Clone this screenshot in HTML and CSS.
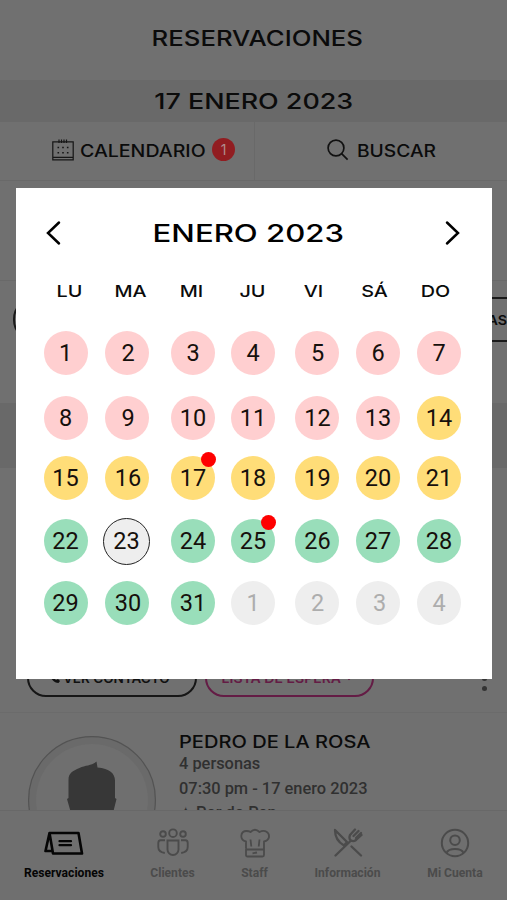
FILE: index.html
```html
<!DOCTYPE html>
<html lang="es">
<head>
  <meta charset="UTF-8">
  <meta name="viewport" content="width=device-width, initial-scale=1.0">
  <title>Reservaciones</title>
  <link rel="stylesheet" href="styles.css">
</head>
<body>
  <div class="app">
    <header class="header"><h1 class="wide title">RESERVACIONES</h1></header>
    <div class="date-bar"><span class="wide date">17 ENERO 2023</span></div>
    <div class="tabs">
      <div class="tab tab-calendar">
        <svg width="22" height="22" viewBox="0 0 22 22" fill="none" stroke="#161616" stroke-width="1.2">
          <path d="M.8 2.8h20.4v18H.8zM.8 18.300h20.400M7 .5v3.500M9.500 .5v3.500M12 .5v3.500M14.500 .5v3.500"/>
          <path stroke-width="1.600" d="M5.500 8.500h1.600M10.200 8.500h1.600M14.900 8.500h1.600M5.500 13.700h1.600M10.200 13.700h1.600M14.900 13.700h1.600"/>
        </svg>
        <span class="tab-label label-calendar"><span class="wide">CALENDARIO</span></span>
        <span class="count">1</span>
      </div>
      <div class="tab tab-search">
        <svg width="22" height="22" viewBox="0 0 22 22" fill="none" stroke="#111" stroke-width="1.700">
          <circle cx="9" cy="9" r="7.900"/><path d="M14.600 14.600l6 6"/>
        </svg>
        <span class="tab-label label-search"><span class="wide">BUSCAR</span></span>
      </div>
    </div>
    <div class="summary"></div>
    <div class="filters">
      <span class="pill"></span>
      <span class="pill pill-last"><span class="wide">MESAS</span></span>
    </div>
    <div class="section-band"></div>
    <article class="card card-first">
      <div class="actions">
        <button class="btn btn-contact">
          <svg width="10" height="10" viewBox="0 0 10 10"><path fill="#111" d="M2 0l2 2-1 2 3 3 2-1 2 2-1.500 2C4 10 0 5 0 1.500z"/></svg>
          <span class="wide">VER CONTACTO</span>
        </button>
        <button class="btn btn-wait"><span class="wide">LISTA DE ESPERA</span>
          <svg width="8" height="6" viewBox="0 0 8 6" fill="none" stroke="#641c45" stroke-width="1.800"><path d="M1 1l3 3 3-3"/></svg>
        </button>
      </div>
      <div class="dots"><i></i><i></i><i></i></div>
    </article>
    <article class="card person">
      <svg class="avatar" width="128" height="128" viewBox="0 0 128 128">
        <circle cx="64" cy="64" r="63.400" fill="#6a6a6a" stroke="#535353" stroke-width="1.200"/>
        <circle cx="64" cy="64" r="56" fill="#6f6f6f"/>
        <path fill="#373737" d="M40.500 62V44c0-7 4-9 11-12 6-3 12-2 17-6.500l1 6c12 1 17.500 6 17.500 13V62l1.500 1-3.500 14c-3 15-11 24-20.500 24S46 92 43 77l-4-14z"/>
      </svg>
      <div class="details">
        <h2><span class="wide">PEDRO DE LA ROSA</span></h2>
        <p>4 personas</p>
        <p class="time">07:30 pm - 17 enero 2023</p>
        <p class="place">✦ Por do Pan</p>
      </div>
    </article>
    <nav class="nav">
      <a class="active">
        <svg width="40" height="30" viewBox="0 0 40 30" fill="none" stroke="#050505" stroke-width="2.200" stroke-linejoin="round" stroke-linecap="round">
          <path d="M5.500 5h29l3.500 20.500H9zM5.500 5L1.500 23H8" stroke-width="2.600"/><path d="M15.500 13.200h11.500M15.500 17.200h11.500"/>
        </svg>
        <span>Reservaciones</span>
      </a>
      <a>
        <svg width="32" height="30" viewBox="0 0 32 30" fill="none" stroke="#4b4b4b" stroke-width="1.900">
          <circle cx="16" cy="5.200" r="3.800"/><circle cx="6" cy="6" r="2.800"/><circle cx="26" cy="6" r="2.800"/>
          <path d="M10.500 12.500h11v9a5.500 5.500 0 0 1-11 0zM8 12.300H3.500Q1.300 12.300 1.300 15v4q0 5 6.500 6M24 12.300h4.500q2.200 0 2.200 2.700v4q0 5-6.500 6"/>
        </svg>
        <span>Clientes</span>
      </a>
      <a>
        <svg width="30" height="30" viewBox="0 0 30 30" fill="none" stroke="#4b4b4b" stroke-width="1.800" stroke-linejoin="round">
          <path d="M6 20.500v-7C-.8 12 .2 3 6.500 3q2.500 0 4 1 4.500-4.500 9 0c5.500-3 10 .5 9.500 5q-.5 3.500-5 4.500v13.500q0 1.500-1.500 1.500h-15Q6 28.500 6 27v-5.500h18M10.500 11.500l.8 7M19.500 11.500l-.8 7M12.500 25.300l4.500-.8"/>
        </svg>
        <span>Staff</span>
      </a>
      <a>
        <svg width="30" height="30" viewBox="0 0 30 30" fill="none" stroke="#4b4b4b" stroke-width="2.300" stroke-linecap="round" stroke-linejoin="round">
          <path d="M2.500 27.500L17 13.500M2 2l12 12-3 3.500C5 14 2 9 2 2zM18.500 18.500l9.500 9M22 1.500l-5 5.500q-1.500 4 1 5.500t5-.5L28.500 7M25.500 3l-5 5M28 5l-5 5"/>
        </svg>
        <span>Información</span>
      </a>
      <a>
        <svg width="30" height="30" viewBox="0 0 30 30" fill="none" stroke="#4b4b4b" stroke-width="2">
          <circle cx="15" cy="15" r="13.200"/><circle cx="15" cy="12.200" r="4.800"/><path d="M6.500 25q1.500-4 8.500-4t8.500 4"/>
        </svg>
        <span>Mi Cuenta</span>
      </a>
    </nav>
  </div>

  <div class="modal">
    <div class="modal-head">
      <svg width="16" height="26" viewBox="0 0 16 26" fill="none" stroke="#000" stroke-width="2.500" stroke-linecap="round"><path d="M14 2.500L3 13l11 10.500"/></svg>
      <h2 class="wide month">ENERO 2023</h2>
      <svg width="16" height="26" viewBox="0 0 16 26" fill="none" stroke="#000" stroke-width="2.500" stroke-linecap="round"><path d="M2 2.500L13 13 2 23.500"/></svg>
    </div>
    <div class="weekdays">
      <span class="wide">LU</span><span class="wide">MA</span><span class="wide">MI</span><span class="wide">JU</span><span class="wide">VI</span><span class="wide">SÁ</span><span class="wide">DO</span>
    </div>
    <div class="days">
      <span class="day full">1</span><span class="day full">2</span><span class="day full">3</span><span class="day full">4</span><span class="day full">5</span><span class="day full">6</span><span class="day full">7</span>
      <span class="day full">8</span><span class="day full">9</span><span class="day full">10</span><span class="day full">11</span><span class="day full">12</span><span class="day full">13</span><span class="day few">14</span>
      <span class="day few">15</span><span class="day few">16</span><span class="day few alert">17</span><span class="day few">18</span><span class="day few">19</span><span class="day few">20</span><span class="day few">21</span>
      <span class="day free">22</span><span class="day today">23</span><span class="day free">24</span><span class="day free alert">25</span><span class="day free">26</span><span class="day free">27</span><span class="day free">28</span>
      <span class="day free">29</span><span class="day free">30</span><span class="day free">31</span><span class="day other">1</span><span class="day other">2</span><span class="day other">3</span><span class="day other">4</span>
    </div>
  </div>
</body>
</html>
```
FILE: styles.css
```css
* {
  box-sizing: border-box;
}
body {
  margin: 0;
  font-family: Roboto, Arial, sans-serif;
  background: #707070;
  color: #0b0b0b;
}
h1, h2, p {
  margin: 0;
}
.app {
  height: 900px;
  display: flex;
  flex-direction: column;
  overflow: hidden;
}
/* extended display lettering */
.wide {
  display: inline-block;
  font-family: Inter, "Liberation Sans", sans-serif;
  font-weight: 500;
  white-space: nowrap;
  transform: scaleX(1.2);
}
.header {
  height: 80px;
  flex: none;
  display: flex;
  justify-content: center;
  padding: 26px 0 0 8px;
}
.title {
  font-size: 21px;
  line-height: 26px;
  height: 26px;
  transform: scaleX(1.225);
}
.date-bar {
  height: 42px;
  flex: none;
  background: #696969;
  display: flex;
  align-items: center;
  justify-content: center;
}
.date {
  font-size: 21px;
  transform: scaleX(1.28);
}
.tabs {
  height: 59px;
  flex: none;
  display: flex;
  border-bottom: 1px solid #696969;
}
.tab {
  display: flex;
  align-items: flex-start;
  padding-top: 17px;
}
.tab-calendar {
  width: 255px;
  padding-left: 52px;
  border-right: 1px solid #696969;
}
.tab-search {
  padding-left: 72px;
}
.tab-label {
  font-size: 17px;
  line-height: 25px;
}
.tab-label .wide, h2 .wide {
  transform-origin: left;
}
.tab-label .wide {
  transform: scaleX(1.15);
}
.label-search .wide {
  transform: scaleX(1.13);
}
.label-calendar {
  width: 132px;
  margin-left: 6px;
}
.label-search {
  margin-left: 8px;
}
.count {
  width: 23px;
  height: 23px;
  margin-top: -1px;
  border-radius: 50%;
  background: #911d21;
  color: #b08c8d;
  font: 14px/23px Inter, sans-serif;
  text-align: center;
}
.summary {
  height: 100px;
  flex: none;
  border-bottom: 1px solid #696969;
}
.filters {
  height: 122px;
  flex: none;
  display: flex;
  justify-content: space-between;
  padding: 16px 0 0 13px;
}
.pill {
  width: 120px;
  height: 45px;
  border: 2px solid #1a1a1a;
  border-radius: 22px;
}
.pill-last {
  border-right: 0;
  border-radius: 22px 0 0 22px;
  font-size: 13px;
  line-height: 42px;
  text-align: right;
}
.pill-last .wide {
  font-weight: 600;
  transform-origin: right;
  transform: scaleX(1.1);
}
.section-band {
  height: 65px;
  flex: none;
  background: #696969;
}
.card {
  flex: none;
}
.card-first {
  height: 245px;
  display: flex;
  align-items: flex-end;
  justify-content: space-between;
  padding: 0 20px 15px 27px;
  border-bottom: 1px solid #6b6b6b;
}
.actions {
  display: flex;
  gap: 8px;
}
.btn {
  width: 170px;
  height: 38px;
  padding: 0 7px 0 0;
  border: 2px solid #161616;
  border-radius: 19px;
  background: none;
  color: #111;
  font-size: 13px;
  display: flex;
  align-items: center;
  justify-content: center;
  gap: 5px;
}
.btn .wide {
  font-weight: 600;
  transform: scaleX(1.04);
}
.btn-wait {
  padding: 0;
  color: #641c45;
  border-color: #641c45;
  width: 169px;
  gap: 9px;
}
.btn-wait .wide {
  transform: scaleX(1.08);
}
.dots {
  display: flex;
  flex-direction: column;
  gap: 5px;
  padding-bottom: 6px;
}
.dots i {
  width: 5px;
  height: 5px;
  border-radius: 50%;
  background: #333;
}
.person {
  height: 97px;
  display: flex;
  overflow: hidden;
  padding: 18px 0 0 28px;
}
.avatar {
  flex: none;
  margin-top: 5px;
}
.details {
  margin-left: 23px;
  color: #303030;
  font-size: 16.400px;
  font-weight: 500;
  line-height: 24px;
}
.details h2 {
  font-size: 17px;
  line-height: 22px;
  color: #0b0b0b;
}
.details h2 .wide {
  transform: scaleX(1.18);
}
.details p {
  line-height: 22px;
}
.details .time {
  margin-top: 3px;
}
.details .place {
  margin-top: 2px;
}
.nav {
  height: 90px;
  flex: none;
  background: #6f6f6f;
  border-top: 1px solid #686868;
  display: grid;
  grid-template-columns: 128px 89px 75px 111px 104px;
  padding-top: 17px;
}
.nav a {
  display: flex;
  flex-direction: column;
  align-items: center;
  gap: 7px;
  color: #4b4b4b;
  font-size: 12.100px;
  font-weight: 700;
  line-height: 16px;
}
.nav .active {
  color: #050505;
}
.modal {
  position: absolute;
  top: 188px;
  left: 16px;
  width: 476px;
  height: 491px;
  background: #fff;
}
.modal-head {
  height: 90px;
  padding: 0 31px 0 29px;
  display: flex;
  align-items: center;
  justify-content: space-between;
  color: #000;
}
.month {
  font-size: 24.500px;
  padding-right: 8px;
  transform: scaleX(1.27);
}
.weekdays {
  display: grid;
  grid-template-columns: repeat(7, 61px);
  padding-left: 23px;
  height: 42px;
  font-size: 16.500px;
  line-height: 26px;
  text-align: center;
}
.days {
  display: grid;
  grid-template-columns: 61px 61px 72px 48px 79px 43px 80px;
  grid-template-rows: 65px 65px 55px 72px 52px;
  place-items: center;
  padding-left: 19px;
}
.day {
  position: relative;
  width: 44px;
  height: 44px;
  border-radius: 50%;
  font-size: 23.500px;
  line-height: 44px;
  text-align: center;
  color: #16100c;
}
.full {
  background: #ffcfd0;
}
.few {
  background: #ffdd78;
}
.free {
  background: #99deba;
}
.today {
  width: 47px;
  height: 47px;
  background: #eee;
  border: 1.500px solid #222;
}
.other {
  background: #eee;
  color: #adadad;
}
.day:nth-child(7n+2):not(.today) {
  padding-left: 3px;
}
.day:nth-child(7n+5) {
  padding-left: 2px;
}
.day:nth-child(7n+6) {
  padding-left: 1px;
}
.other:nth-child(7n+6) {
  padding-left: 4px;
}
.alert::after {
  content: "";
  position: absolute;
  top: -4px;
  right: -1px;
  width: 15px;
  height: 15px;
  border-radius: 50%;
  background: #fe0000;
}
```
